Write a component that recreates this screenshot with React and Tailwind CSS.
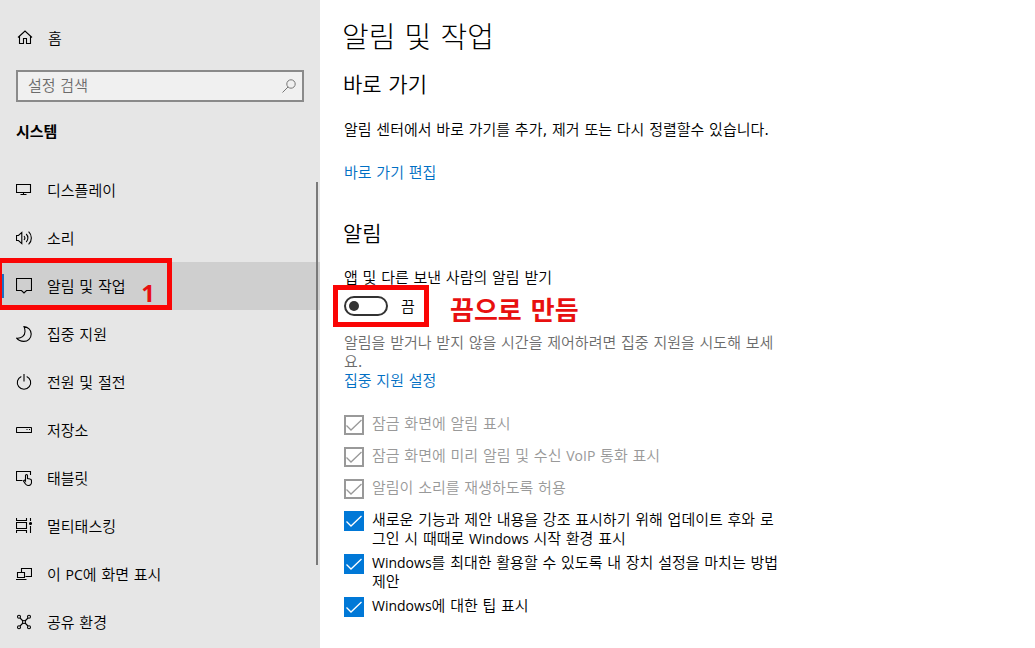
import React, { useState } from "react";

const korean = "font-['DejaVu_Sans','Noto_Sans_CJK_KR',sans-serif]";

function Icon({ children }) {
  return (
    <svg className="size-4 shrink-0" viewBox="0 0 16 16" fill="none" stroke="currentColor" strokeWidth="1.1" aria-hidden="true">
      {children}
    </svg>
  );
}

function Latin({ children }) {
  return <span className="font-['Open_Sans',sans-serif] text-[14px] leading-none font-normal">{children}</span>;
}

function Mark({ children }) {
  return <span className="font-normal">{children}</span>;
}

const navItems = [
  {
    id: "display",
    label: "디스플레이",
    icon: <path d="M.5 2.5h14v8H.5zM7.5 10.5v2M4.5 12.5h6" />,
  },
  {
    id: "sound",
    label: "소리",
    icon: (
      <path d="M.5 5.5h2L5.8 2.4v11.2L2.5 10.5h-2zM8 6a3 3 0 0 1 0 4M10.2 4a5.6 5.6 0 0 1 0 8M12.6 1.6a8.8 8.8 0 0 1 0 12.8" />
    ),
  },
  {
    id: "notifications",
    label: "알림 및 작업",
    icon: <path d="M.5.5h15v12h-5L8 15l-2.5-2.5h-5z" />,
  },
  {
    id: "focus",
    label: "집중 지원",
    icon: <path d="M8 .6c4 .4 7.2 3.5 7.2 7.4 0 4.200-3.300 7.400-7.400 7.400-3 0-5.600-1.200-7.200-3.200C5.400 12.600 9 10 9 5.500 9 3.700 8.700 2.200 8 .6z" />,
  },
  {
    id: "power",
    label: "전원 및 절전",
    icon: <path d="M8 0v7.500M5.300 2.400a6.700 6.700 0 1 0 5.400 0" />,
  },
  {
    id: "storage",
    label: "저장소",
    icon: (
      <>
        <rect x=".5" y="5.5" width="15" height="5" rx=".5" />
        <path d="M10.5 7.5h1M13 7.5h1" />
      </>
    ),
  },
  {
    id: "tablet",
    label: "태블릿",
    icon: (
      <>
        <path d="M6.500 10.500h-6v-9h14v3.500" />
        <path d="M9.500 11V5.500a1 1 0 0 1 2 0V8.500l2.500.5a1.800 1.800 0 0 1 1.500 1.800v1.700a3 3 0 0 1-3 3c-1.500 0-2.500-.7-3.200-1.800L7.500 11c0-1 1.200-1.200 2 0z" />
      </>
    ),
  },
  {
    id: "multitasking",
    label: "멀티태스킹",
    icon: (
      <>
        <path d="M.5 0v2.500h10V0M.5 4.500h10v6H.5zM.5 15v-2.500h10V15M14.500 0v3M14.500 8v7" />
        <circle cx="14.5" cy="5.5" r="1" fill="currentColor" />
      </>
    ),
  },
  {
    id: "projecting",
    label: (
      <>
        이 <Latin>PC</Latin>에 화면 표시
      </>
    ),
    icon: <path d="M5.500 6V2.500h10v8H9.500M1.500 6.500h7v5h-7zM0 13.500h10.500" />,
  },
  {
    id: "shared",
    label: "공유 환경",
    icon: (
      <>
        <circle cx="3" cy="2.8" r="1.5" />
        <circle cx="13" cy="2.8" r="1.5" />
        <circle cx="3" cy="13.2" r="1.5" />
        <circle cx="13" cy="13.2" r="1.5" />
        <circle cx="8" cy="8" r="1.5" />
        <path d="M4 4l3 3M12 4L9 7M4 12l3-3M12 12L9 9" />
      </>
    ),
  },
];

const options = [
  { id: "lock", disabled: true, label: "잠금 화면에 알림 표시" },
  {
    id: "voip",
    disabled: true,
    label: (
      <>
        잠금 화면에 미리 알림 및 수신 <Latin>VoIP</Latin> 통화 표시
      </>
    ),
  },
  { id: "play", disabled: true, label: "알림이 소리를 재생하도록 허용" },
  {
    id: "welcome",
    label: (
      <>
        새로운 기능과 제안 내용을 강조 표시하기 위해 업데이트 후와 로그인 시 때때로 <Latin>Windows</Latin> 시작 환경 표시
      </>
    ),
  },
  {
    id: "setup",
    label: (
      <>
        <Latin>Windows</Latin>를 최대한 활용할 수 있도록 내 장치 설정을 마치는 방법 제안
      </>
    ),
  },
  {
    id: "tips",
    label: (
      <>
        <Latin>Windows</Latin>에 대한 팁 표시
      </>
    ),
  },
];

function Option({ id, label, disabled }) {
  return (
    <div className="flex min-h-[27px] items-start gap-2">
      <span className="grid size-5 shrink-0">
        <input
          id={id}
          type="checkbox"
          defaultChecked
          disabled={disabled}
          className="peer col-start-1 row-start-1 size-5 appearance-none border-2 border-[#333333] checked:border-[#0078d7] checked:bg-[#0078d7] disabled:border-[#999999] disabled:bg-white"
        />
        <svg
          className="pointer-events-none invisible col-start-1 row-start-1 size-5 text-white peer-checked:visible peer-disabled:text-[#999999]"
          viewBox="0 0 20 20"
          fill="none"
          stroke="currentColor"
          strokeWidth="1.3"
          aria-hidden="true"
        >
          <path d="M2.500 10.500l4.500 4.500L17.500 5" />
        </svg>
      </span>
      <label htmlFor={id} className={disabled ? "text-[#999999]" : "text-black"}>
        {label}
      </label>
    </div>
  );
}

function Sidebar() {
  return (
    <aside className="flex w-80 shrink-0 flex-col bg-[#e6e6e6]">
      <a href="#home" className="mt-7 flex h-5 items-center gap-[15px] pl-[17px]">
        <Icon>
          <path d="M1 7.500L8 1l7 6.500M2.500 6.500v7h4v-5h3v5h4v-7" />
        </Icon>
        <span className="pt-0.5">홈</span>
      </a>
      <div className="mx-4 mt-[22px] flex h-8 items-center border-2 border-[#8a8a8a] bg-[#f0f0f0] pr-[5px]">
        <input
          type="search"
          aria-label="설정 검색"
          placeholder="설정 검색"
          className="min-w-0 flex-1 bg-transparent pl-2.5 outline-none placeholder:text-[#6b6b6b]"
        />
        <button type="button" aria-label="검색" className="text-[#777777]">
          <svg className="size-4" viewBox="0 0 16 16" fill="none" stroke="currentColor" aria-hidden="true">
            <circle cx="10" cy="6" r="4.2" />
            <path d="M7 9l-5.500 5.500" />
          </svg>
        </button>
      </div>
      <h2 className="mt-5 pl-4 leading-5 font-bold">시스템</h2>
      <nav className="mt-6">
        {navItems.map((item) => {
          const current = item.id === "notifications";
          return (
            <a
              key={item.id}
              href={"#" + item.id}
              aria-current={current ? "page" : undefined}
              className={"relative flex h-12 items-center gap-[15px] pl-4 " + (current ? "bg-[#cfcfcf]" : "")}
            >
              {current && <span className="absolute left-0 h-6 w-1 bg-[#1a6fc4]" />}
              <Icon>{item.icon}</Icon>
              <span className="pt-0.5">{item.label}</span>
              {current && (
                <span className="absolute -top-1 -left-[3px] flex h-[52px] w-[175px] items-end justify-end border-[5px] border-[#fa0505] pr-3 font-['Open_Sans',sans-serif] text-2xl leading-6 font-bold text-[#e81010]">
                  1
                </span>
              )}
            </a>
          );
        })}
      </nav>
      <span className="absolute top-[182px] left-[316px] h-[383px] w-0.5 bg-[#7a7a7a]" />
    </aside>
  );
}

export default function App() {
  const [on, setOn] = useState(false);
  return (
    <div
      className={
        "relative flex h-screen overflow-hidden bg-white text-[15px] leading-[19px] font-[350] text-black " + korean
      }
    >
      <Sidebar />
      <main className="min-w-0 flex-1 pt-[18px] pl-6">
        <div className="max-w-[440px]">
          <h1 className="-ml-0.5 text-[29px] leading-10 font-light">알림 및 작업</h1>
          <section>
            <h2 className="mt-[13px] -ml-px text-[21px] leading-7 font-[350]">바로 가기</h2>
            <p className="mt-[22px]">
              알림 센터에서 바로 가기를 추가<Mark>,</Mark> 제거 또는 다시 정렬할수 있습니다<Mark>.</Mark>
            </p>
            <a href="#edit" className="mt-6 block text-[#006fc4]">
              바로 가기 편집
            </a>
          </section>
          <section>
            <h2 className="mt-[37px] -ml-px text-[21px] leading-7 font-[350]">알림</h2>
            <p id="receive" className="mt-[21px]">
              앱 및 다른 보낸 사람의 알림 받기
            </p>
            <div className="relative mt-2 flex h-5 items-center gap-[13px]">
              <button
                type="button"
                role="switch"
                aria-checked={on}
                aria-labelledby="receive"
                onClick={() => setOn(!on)}
                className={
                  "flex h-5 w-11 items-center rounded-full border-2 border-[#333333] px-[3px] " +
                  (on ? "justify-end" : "justify-start")
                }
              >
                <span className="size-2.5 rounded-full bg-[#333333]" />
              </button>
              <span className="pt-[3px]">{on ? "켬" : "끔"}</span>
              <span className="absolute -top-px left-[106px] text-[26px] leading-8 font-bold text-[#e81010]">
                끔으로 만듬
              </span>
              <span className="pointer-events-none absolute -top-[11px] -left-[11px] h-[42px] w-24 border-[5px] border-[#fa0505]" />
            </div>
            <p className="mt-[18px] text-[#6b6b6b]">
              알림을 받거나 받지 않을 시간을 제어하려면 집중 지원을 시도해 보세요<Mark>.</Mark>
            </p>
            <a href="#focus" className="block text-[#006fc4]">
              집중 지원 설정
            </a>
            <div className="mt-6 flex flex-col gap-[5px]">
              {options.map((option) => (
                <Option key={option.id} {...option} />
              ))}
            </div>
          </section>
        </div>
      </main>
    </div>
  );
}
